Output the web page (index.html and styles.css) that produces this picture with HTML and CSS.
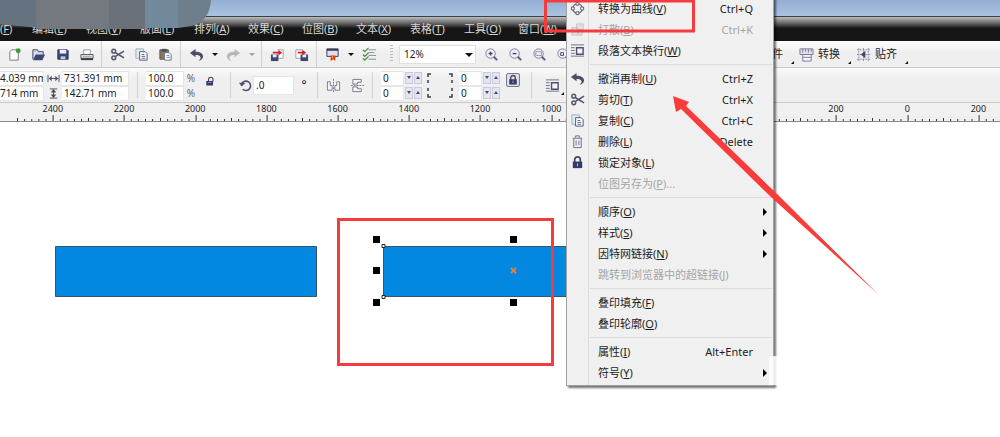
FILE: index.html
```
<!DOCTYPE html>
<html lang="zh-CN">
<head>
<meta charset="utf-8">
<title>绘图</title>
<link rel="stylesheet" href="styles.css">
</head>
<body>
<svg class="defs" aria-hidden="true">
  <symbol id="new" viewBox="0 0 16 16"><path d="M3 5l2-2h7v11H3z" fill="#fff" stroke="#70788c"/><circle cx="12" cy="4" r="2.6" fill="#38a032"/></symbol>
  <symbol id="open" viewBox="0 0 16 16"><path d="M2 13V3h5l1 2h5v3" fill="#d8dcea" stroke="#343d66"/><path d="M2 14l3-6h10l-3 6z" fill="#3c4674"/></symbol>
  <symbol id="save" viewBox="0 0 16 16"><path d="M3 3h10l1 1v9H3z" fill="#3c4674" stroke="#2c355c"/><path d="M5 3h7v4H5z" fill="#eef"/><path d="M6 10h5v3H6z" fill="#c8cde0"/></symbol>
  <symbol id="print" viewBox="0 0 16 16"><path d="M5 8V3h7v5" fill="#fff" stroke="#9094a0"/><path d="M2 8h13v4H2z" fill="#dfe2de" stroke="#555a6a"/><path d="M2 13h13" stroke="#33384d" stroke-width="2"/><path d="M4 10h9" stroke="#9fae80"/></symbol>
  <symbol id="cut" viewBox="0 0 16 16"><g fill="none" stroke="#53566c" stroke-width="1.6"><circle cx="4" cy="4.500" r="2"/><circle cx="4" cy="11.500" r="2"/><path d="M6 6l3 2 6 3.500M6 10l3-2 6-3.500"/></g></symbol>
  <symbol id="copy" viewBox="0 0 16 16"><path d="M2 2h8v10H2z" fill="#dfeaee" stroke="#9bb0bc"/><path d="M6 5h6l2 2v7H6z" fill="#fff" stroke="#4a5376"/><path d="M8 8h3M8 10h4M8 12h4" stroke="#59648c"/></symbol>
  <symbol id="paste" viewBox="0 0 16 16"><path d="M2 3h9v10H2z" fill="#8a7658" stroke="#5c5248"/><path d="M4 2h5v3H4z" fill="#444960"/><path d="M7 6h5l2 2v6H7z" fill="#fff" stroke="#69718e"/><path d="M9 9h3M9 11h4" stroke="#78809c"/></symbol>
  <symbol id="undo" viewBox="0 0 16 16"><path d="M1 6.500L7 2v3c5 0 8 2 8 5 0 2-2 4-5 5 2-2 3-3 2-4.500C11.500 9 10 8.500 7 8.500V11z" fill="#4b4d63"/></symbol>
  <symbol id="import" viewBox="0 0 16 16"><path d="M8 3h6v9H9" fill="#fff" stroke="#9a9ca8"/><path d="M1 8h8v7H1z" fill="#3c4674"/><path d="M3 8h4v3H3z" fill="#eef"/><path d="M3 5h6V3l4 3-4 3V7H3z" fill="#d3212c"/></symbol>
  <symbol id="export" viewBox="0 0 16 16"><path d="M2 3h7v9H2z" fill="#fff" stroke="#9a9ca8"/><path d="M7 8h8v7H7z" fill="#3c4674"/><path d="M9 8h4v3H9z" fill="#eef"/><path d="M4 5h5V3l4 3-4 3V7H4z" fill="#d3212c"/></symbol>
  <symbol id="app" viewBox="0 0 16 16"><path d="M2 2h12v8H2z" fill="#dfe2ec" stroke="#353a58"/><path d="M2 3h12" stroke="#353a58" stroke-width="2"/><path d="M6 9h5v6l-2-2-3 2z" fill="#e23a21"/><path d="M8 9v3" stroke="#f7ab3a"/></symbol>
  <symbol id="options" viewBox="0 0 16 16"><path d="M7 3h8M7 6h6M7 9h8M7 13h8" stroke="#858b99"/><path d="M1 3l2 2 4-4M1 8l2 2 4-4M1 12l2 2 4-4" fill="none" stroke="#3f8a3c" stroke-width="1.300"/></symbol>
  <symbol id="lens" viewBox="0 0 16 16"><circle cx="7" cy="7" r="5" fill="#eef0f8" stroke="#777b92"/><path d="M10.500 10.500L14 14" stroke="#5c5c78" stroke-width="2.200"/></symbol>
  <symbol id="lock" viewBox="0 0 16 16"><path d="M5 8V5a3 3 0 016 0v3" fill="none" stroke="#454861" stroke-width="1.800"/><path d="M3 7h10v7H3z" fill="#353b66"/><path d="M8 9v3" stroke="#c5c8df"/></symbol>
  <symbol id="unlock" viewBox="0 0 16 16"><path d="M6 9V6a3 3 0 016 0v3" fill="none" stroke="#454861" stroke-width="1.500"/><path d="M3 8h9v6H3z" fill="#353b66"/><path d="M5 10h5" stroke="#aab"/></symbol>
  <symbol id="wrap" viewBox="0 0 16 16"><path d="M1 2h14M1 5h4M1 8h4M1 11h4M1 14h14" stroke="#686c82"/><path d="M7 5h7v7H7z" fill="#f2f2f7" stroke="#4c5170" stroke-width="1.500"/></symbol>
  <symbol id="width" viewBox="0 0 14 12"><path d="M1 2v8M13 2v8M2 6h10" stroke="#444a62"/><path d="M2 6l3-3v6zM12 6L9 3v6z" fill="#444a62"/></symbol>
  <symbol id="height" viewBox="0 0 14 12"><path d="M3 1h8M3 11h8M7 2v8" stroke="#444a62"/><path d="M7 1l3 4H4zM7 11l3-4H4z" fill="#444a62"/></symbol>
  <symbol id="rotate" viewBox="0 0 16 16"><path d="M4 6a5 5 0 11 1 6" fill="none" stroke="#4c506a" stroke-width="1.700"/><path d="M1 5h7L4 9z" fill="#4c506a"/></symbol>
  <symbol id="mirror" viewBox="0 0 16 16"><path d="M8 1v14" stroke="#777b8b" stroke-dasharray="2 1"/><path d="M1.500 4v9h5V8h-2V4zM14.500 4v9h-5V8h2V4z" fill="#f6f6fa" stroke="#777b8b"/></symbol>
  <symbol id="corner" viewBox="0 0 8 12"><path d="M2 11V2h4" fill="none" stroke="#3b3d4b" stroke-width="1.500" stroke-dasharray="3 3 6"/></symbol>
  <symbol id="convert" viewBox="0 0 16 16"><path d="M1 2h14v6H1z" fill="#e2e2ef" stroke="#777990"/><path d="M4 2v4M7 2v3M10 2v4M13 2v3" stroke="#777990"/><path d="M4 8h9v7H4zM4 11h9" fill="#f7f7fb" stroke="#777990"/></symbol>
  <symbol id="snap" viewBox="0 0 16 16"><path d="M3 1v14M8 1v14M13 1v14M1 3h14M1 8h14M1 13h14" stroke="#888aa8" stroke-dasharray="2 1"/><path d="M5 8l5-4v8z" fill="#45496c"/></symbol>
  <symbol id="curve" viewBox="0 0 16 16"><circle cx="8" cy="8" r="5" fill="none" stroke="#55586e" stroke-width="1.300"/><g fill="#fff" stroke="#55586e"><path d="M6.500 1.500h3v3h-3zM6.500 11.500h3v3h-3zM1.500 6.500h3v3h-3zM11.500 6.500h3v3h-3z"/></g></symbol>
  <symbol id="break" viewBox="0 0 16 16"><path d="M2 6h6v8H2zM7 2h7v6H7zM9 10h4v4H9z" fill="#e0e0e0" stroke="#c4c4c4"/></symbol>
  <symbol id="trash" viewBox="0 0 16 16"><path d="M3 4.500h10M6 4V2h4v2M4 5v9.500h8V5M6.500 7v5M9.500 7v5" fill="none" stroke="#6a6e86"/></symbol>
  <symbol id="ticks"><g fill="#333"><rect x="0%" y="3" width="1" height="3"/><rect x="10%" y="4" width="1" height="2"/><rect x="20%" y="4" width="1" height="2"/><rect x="30%" y="4" width="1" height="2"/><rect x="40%" y="4" width="1" height="2"/><rect x="50%" y="0" width="1" height="6"/><rect x="60%" y="4" width="1" height="2"/><rect x="70%" y="4" width="1" height="2"/><rect x="80%" y="4" width="1" height="2"/><rect x="90%" y="4" width="1" height="2"/></g></symbol>
</svg>

<div class="window">
  <header class="titlebar"></header>
  <nav class="menubar">
    <a href="#">文件(<u>F</u>)</a><a href="#">编辑(<u>E</u>)</a><a href="#">视图(<u>V</u>)</a><a href="#">版面(<u>L</u>)</a><a href="#">排列(<u>A</u>)</a><a href="#">效果(<u>C</u>)</a><a href="#">位图(<u>B</u>)</a><a href="#">文本(<u>X</u>)</a><a href="#">表格(<u>T</u>)</a><a href="#">工具(<u>O</u>)</a><a href="#">窗口(<u>W</u>)</a>
  </nav>
  <svg class="smear" viewBox="0 0 220 36" aria-hidden="true"><path d="M0 0h211c-1 14-7 23-20 26l-13 2H40L0 24z" fill="#6e7e8b"/><path d="M0 0h36v27L0 24z" fill="#657380"/><path d="M36 0h73v29H36z" fill="#73797f"/><path d="M109 0h36v29h-36z" fill="#6a7179"/><path d="M145 0h33v28h-33z" fill="#71899b"/></svg>

  <div class="toolbar">
    <button class="tool" aria-label="新建"><svg><use href="#new"/></svg></button>
    <button class="tool" aria-label="打开"><svg><use href="#open"/></svg></button>
    <button class="tool" aria-label="保存"><svg><use href="#save"/></svg></button>
    <button class="tool" aria-label="打印"><svg><use href="#print"/></svg></button>
    <i class="sep"></i>
    <button class="tool" aria-label="剪切"><svg><use href="#cut"/></svg></button>
    <button class="tool" aria-label="复制"><svg><use href="#copy"/></svg></button>
    <button class="tool" aria-label="粘贴"><svg><use href="#paste"/></svg></button>
    <i class="sep"></i>
    <button class="tool" aria-label="撤消"><svg><use href="#undo"/></svg></button>
    <button class="drop" aria-label="撤消列表"></button>
    <button class="tool faded" aria-label="重做"><svg class="flip"><use href="#undo"/></svg></button>
    <button class="drop faded" aria-label="重做列表"></button>
    <i class="sep"></i>
    <button class="tool" aria-label="导入"><svg><use href="#import"/></svg></button>
    <button class="tool" aria-label="导出"><svg><use href="#export"/></svg></button>
    <i class="sep"></i>
    <button class="tool" aria-label="应用程序启动器"><svg><use href="#app"/></svg></button>
    <button class="drop" aria-label="启动器列表"></button>
    <button class="tool" aria-label="选项"><svg><use href="#options"/></svg></button>
    <i class="grip"></i>
    <div class="zoom"><select aria-label="缩放级别"><option>12%</option></select></div>
    <button class="tool" aria-label="放大"><svg viewBox="0 0 16 16"><use href="#lens"/><path d="M5 7h4M7 5v4" stroke="#3f4462" stroke-width="1.500"/></svg></button>
    <button class="tool" aria-label="缩小"><svg viewBox="0 0 16 16"><use href="#lens"/><path d="M5 7h4" stroke="#3f4462" stroke-width="1.500"/></svg></button>
    <button class="tool" aria-label="缩放选定对象"><svg viewBox="0 0 16 16"><use href="#lens"/><path d="M4 5h6v4H4z" fill="none" stroke="#3f4462" stroke-dasharray="1 1"/></svg></button>
    <button class="tool" aria-label="缩放全部对象"><svg viewBox="0 0 16 16"><use href="#lens"/><path d="M5 6h3v3H5z" fill="none" stroke="#3f4462"/></svg></button>
    <div class="docks">
      <button class="dock">件</button>
      <button class="dock"><svg><use href="#convert"/></svg>转换</button>
      <button class="dock"><svg><use href="#snap"/></svg>贴齐</button>
    </div>
  </div>

  <div class="properties">
    <div class="pair place"><input aria-label="X" value="4.039 mm"><input aria-label="Y" value="714 mm"></div>
    <div class="pair marks"><svg><use href="#width"/></svg><svg><use href="#height"/></svg></div>
    <div class="pair size"><input aria-label="宽度" value="731.391 mm"><input aria-label="高度" value="142.71 mm"></div>
    <i class="sep wide"></i>
    <div class="pair scale"><input aria-label="水平缩放" value="100.0"><input aria-label="垂直缩放" value="100.0"></div>
    <div class="pair percent"><span>%</span><span>%</span></div>
    <button class="tool raised" aria-label="锁定比率"><svg class="small"><use href="#unlock"/></svg></button>
    <i class="sep wide"></i>
    <svg class="icon"><use href="#rotate"/></svg>
    <input class="angle" aria-label="旋转角度" value=".0">
    <span class="degree">°</span>
    <i class="sep"></i>
    <button class="tool" aria-label="水平镜像"><svg><use href="#mirror"/></svg></button>
    <button class="tool" aria-label="垂直镜像"><svg class="turn"><use href="#mirror"/></svg></button>
    <i class="sep"></i>
    <div class="pair round"><input aria-label="左上圆角" value="0"><input aria-label="左下圆角" value="0"></div>
    <div class="spins"><button class="down" aria-label="左上减"></button><button class="up" aria-label="左上加"></button><button class="down" aria-label="左下减"></button><button class="up" aria-label="左下加"></button></div>
    <div class="corners"><svg><use href="#corner"/></svg><svg class="flip"><use href="#corner"/></svg><svg class="flop"><use href="#corner"/></svg><svg class="flip flop"><use href="#corner"/></svg></div>
    <div class="pair round"><input aria-label="右上圆角" value="0"><input aria-label="右下圆角" value="0"></div>
    <div class="spins"><button class="down" aria-label="右上减"></button><button class="up" aria-label="右上加"></button><button class="down" aria-label="右下减"></button><button class="up" aria-label="右下加"></button></div>
    <button class="tool pressed" aria-label="全部圆角"><svg class="small"><use href="#lock"/></svg></button>
    <i class="sep wide"></i>
    <button class="tool marked" aria-label="段落文本换行"><svg><use href="#wrap"/></svg></button>
  </div>

  <div class="ruler">
    <div class="scale-strip">
      <div></div>
      <div><span>2400</span><svg><use href="#ticks"/></svg></div>
      <div><span>2200</span><svg><use href="#ticks"/></svg></div>
      <div><span>2000</span><svg><use href="#ticks"/></svg></div>
      <div><span>1800</span><svg><use href="#ticks"/></svg></div>
      <div><span>1600</span><svg><use href="#ticks"/></svg></div>
      <div><span>1400</span><svg><use href="#ticks"/></svg></div>
      <div><span>1200</span><svg><use href="#ticks"/></svg></div>
      <div><span>1000</span><svg><use href="#ticks"/></svg></div>
      <div><span></span><svg><use href="#ticks"/></svg></div>
      <div><span></span><svg><use href="#ticks"/></svg></div>
      <div><span></span><svg><use href="#ticks"/></svg></div>
      <div><span>200</span><svg><use href="#ticks"/></svg></div>
      <div><span>0</span><svg><use href="#ticks"/></svg></div>
      <div><span>200</span><svg><use href="#ticks"/></svg></div>
    </div>
  </div>

  <main class="canvas">
    <svg aria-label="绘图页面">
      <g fill="#0388e2" stroke="#35566f"><path d="M55.500 124.500h261v50h-261zM383.500 124.500h256v50h-256z"/></g>
      <g><path d="M373 114h7v7h-7zM510 114h7v7h-7zM373 145h7v7h-7zM373 177h7v7h-7zM510 177h7v7h-7z"/></g>
      <g fill="#fff" stroke="#222"><path d="M382 122.500h3v3h-3zM382 173.500h3v3h-3z"/></g>
      <path d="M511 146l5 5M516 146l-5 5" stroke="#e0813f" stroke-width="2"/>
    </svg>
  </main>

  <div class="context" role="menu">
    <button><svg><use href="#curve"/></svg><span>转换为曲线(<u>V</u>)</span><kbd>Ctrl+Q</kbd></button>
    <button disabled><svg><use href="#break"/></svg><span>打散(<u>B</u>)</span><kbd>Ctrl+K</kbd></button>
    <button><svg><use href="#wrap"/></svg><span>段落文本换行(<u>W</u>)</span></button>
    <hr>
    <button><svg><use href="#undo"/></svg><span>撤消再制(<u>U</u>)</span><kbd>Ctrl+Z</kbd></button>
    <button><svg><use href="#cut"/></svg><span>剪切(<u>T</u>)</span><kbd>Ctrl+X</kbd></button>
    <button><svg><use href="#copy"/></svg><span>复制(<u>C</u>)</span><kbd>Ctrl+C</kbd></button>
    <button><svg><use href="#trash"/></svg><span>删除(<u>L</u>)</span><kbd>Delete</kbd></button>
    <button><svg><use href="#lock"/></svg><span>锁定对象(<u>L</u>)</span></button>
    <button disabled><svg></svg><span>位图另存为(<u>P</u>)...</span></button>
    <hr>
    <button class="sub"><svg></svg><span>顺序(<u>O</u>)</span></button>
    <button class="sub"><svg></svg><span>样式(<u>S</u>)</span></button>
    <button class="sub"><svg></svg><span>因特网链接(<u>N</u>)</span></button>
    <button disabled><svg></svg><span>跳转到浏览器中的超链接(<u>J</u>)</span></button>
    <hr>
    <button><svg></svg><span>叠印填充(<u>F</u>)</span></button>
    <button><svg></svg><span>叠印轮廓(<u>O</u>)</span></button>
    <hr>
    <button><svg></svg><span>属性(<u>I</u>)</span><kbd>Alt+Enter</kbd></button>
    <button class="sub"><svg></svg><span>符号(<u>Y</u>)</span></button>
  </div>

  <svg class="notes" aria-hidden="true">
    <path d="M769 358q6-4 12 0v27h-12z" fill="#fff" opacity=".85"/>
    <g fill="none" stroke="#f43b3e"><path d="M338.500 219.500h214v145h-214z" stroke-width="3"/><path d="M545.500 1h148v30h-148z" stroke-width="3"/></g>
    <path d="M673 96l16 6-3 4 89 86 104 103-108-98-90-88-5 3z" fill="#f93b3a"/>
  </svg>
</div>
</body>
</html>
```
FILE: styles.css
```
* { box-sizing: border-box; }
body { margin: 0; font: 11px/16px "Noto Sans", "Noto Sans CJK SC", sans-serif; color: #1c1c1c; }
button, input, select { margin: 0; padding: 0; border: 0; background: none; font: inherit; color: inherit; border-radius: 0; }
.defs { position: absolute; width: 0; height: 0; }
.window { position: relative; display: flex; flex-direction: column; min-height: 100vh; overflow: hidden; }
.titlebar { height: 17px; background: linear-gradient(#93afd2, #aac3e0); border-bottom: 1px solid #35404c; }
.menubar { display: flex; height: 24px; padding-top: 4px; background: linear-gradient(#bdbdbd, #777 5px, #2b2b2b 10px, #161616 11px); overflow: hidden; }
.menubar a { flex: 0 0 54px; color: #d6d6d6; text-decoration: none; white-space: nowrap; }
.menubar a:first-child { margin-left: -22px; }
.smear { position: absolute; left: 0; top: 0; width: 220px; height: 36px; }

.toolbar { display: flex; align-items: center; height: 27px; padding-left: 2px; background: linear-gradient(#fdfdfd, #efefef 12px); border-bottom: 1px solid #c9c9c9; }
.toolbar > *, .properties > * { flex: none; }
.tool { display: flex; align-items: center; justify-content: center; width: 24px; height: 22px; }
.tool svg, .icon { width: 15px; height: 15px; }
.tool .small { width: 12px; height: 12px; }
.flip { transform: scaleX(-1); }
.flop { transform: scaleY(-1); }
.flip.flop { transform: scale(-1, -1); }
.turn { transform: rotate(90deg); }
.faded { opacity: .35; }
.drop { width: 13px; height: 20px; display: flex; align-items: center; justify-content: center; }
.drop::before { content: ""; border: 3px solid transparent; border-top: 3px solid #111; border-bottom: 0; }
.sep { width: 1px; height: 26px; margin: 0 3px; background: #d0d0d0; }
.sep.wide { margin: 0 8px; }
.grip { width: 3px; height: 18px; margin: 0 6px 0 9px; background: repeating-linear-gradient(#bbb 0 1px, transparent 1px 3px); }
.zoom { position: relative; width: 77px; margin-right: 3px; }
.zoom select { display: block; width: 100%; height: 19px; padding-left: 4px; appearance: none; background: #fff; border: 1px solid #e0e0e0; font-size: 10px; }
.zoom::after { content: ""; position: absolute; right: 3px; top: 8px; border: 4px solid transparent; border-top-color: #111; border-bottom: 0; pointer-events: none; }
.docks { display: flex; margin-left: 197px; gap: 5px; }
.dock { position: relative; display: flex; align-items: center; gap: 4px; height: 22px; padding-right: 11px; white-space: nowrap; }
.dock svg { width: 15px; height: 15px; }
.dock::after, .marked::after { content: ""; position: absolute; right: 0; bottom: 1px; border-left: 3px solid transparent; border-bottom: 3px solid #111; }

.properties { display: flex; align-items: center; height: 35px; font-size: 10px; background: linear-gradient(#fbfbfb, #efefef 10px); border-bottom: 1px solid #c9c9c9; }
.pair { display: grid; grid-template-rows: 15px 15px; padding-top: 1px; line-height: 15px; }
.pair input { min-width: 0; width: 100%; height: 15px; padding-left: 2px; background: #fff; border: 1px solid #e6e6e6; border-left: 0; }
.pair.place { width: 44px; }
.pair.place input { padding-left: 0; }
.pair.marks { width: 18px; place-items: center; }
.marks svg { width: 13px; height: 11px; }
.pair.size { width: 67px; }
.pair.scale { width: 38px; }
.pair.percent { width: 14px; text-align: center; color: #666; }
.pair.round { width: 23px; margin-left: 5px; }
.properties .icon { margin-left: -1px; }
.properties .angle { width: 41px; height: 19px; padding-left: 2px; background: #fff; border: 1px solid #e6e6e6; }
.degree { width: 20px; text-align: center; font-size: 12px; }
.spins { display: grid; grid-template-columns: 8px 8px; gap: 3px 1px; padding-left: 1px; }
.spins button { display: flex; align-items: center; justify-content: center; height: 12px; background: #e3e5f2; border: 1px solid #c9cbda; }
.spins button::before { content: ""; border: 2px solid transparent; }
.spins .down::before { border-top: 3px solid #42486e; border-bottom: 0; }
.spins .up::before { border-bottom: 3px solid #42486e; border-top: 0; }
.corners { display: grid; grid-template-columns: 8px 8px; justify-content: space-between; gap: 3px; width: 28px; margin-left: 4px; }
.corners svg { width: 8px; height: 12px; }
.raised { margin-bottom: 9px; }
.pressed { width: 14px; height: 14px; margin: 0 3px 10px 6px; border: 1px solid #777a90; border-radius: 2px; background: #dcdde8; }
.marked { position: relative; }

.ruler { height: 19px; overflow: hidden; background: #f0f0f0; border-bottom: 1px solid #8a8a8a; font-size: 9px; line-height: 12px; }
.scale-strip { display: flex; margin: 0 -14px 0 -54px; }
.scale-strip div { flex: 1; display: flex; flex-direction: column; align-items: center; }
.scale-strip span { height: 12px; }
.scale-strip svg { width: 100%; height: 6px; }

.canvas { flex: 1; display: flex; background: #fff; }
.canvas svg { flex: 1; width: 100%; min-height: 315px; }

.context { position: absolute; left: 566px; top: -3px; width: 208px; padding-bottom: 2px; border: 1px solid #a2a2a2; background: linear-gradient(90deg, #f0f0f0 21px, #dcdcdc 21px 22px, #f0f0f0 22px); box-shadow: 2px 2px 2px rgba(0, 0, 0, .55); }
.context button { display: flex; align-items: center; width: 100%; height: 21px; padding: 0 20px 0 3px; text-align: left; white-space: nowrap; }
.context svg { flex: none; width: 15px; height: 15px; margin-right: 13px; }
.context span { flex: 1; }
.context kbd { font: inherit; }
.context button:disabled { color: #a5a5a5; }
.context hr { height: 1px; margin: 3px 1px 3px 23px; border: 0; background: #dcdcdc; }
.sub::after { content: ""; margin-right: -14px; border: 4px solid transparent; border-left-color: #000; border-right: 0; }
.notes { position: absolute; left: 0; top: 0; width: 100%; height: 100%; pointer-events: none; }
```
